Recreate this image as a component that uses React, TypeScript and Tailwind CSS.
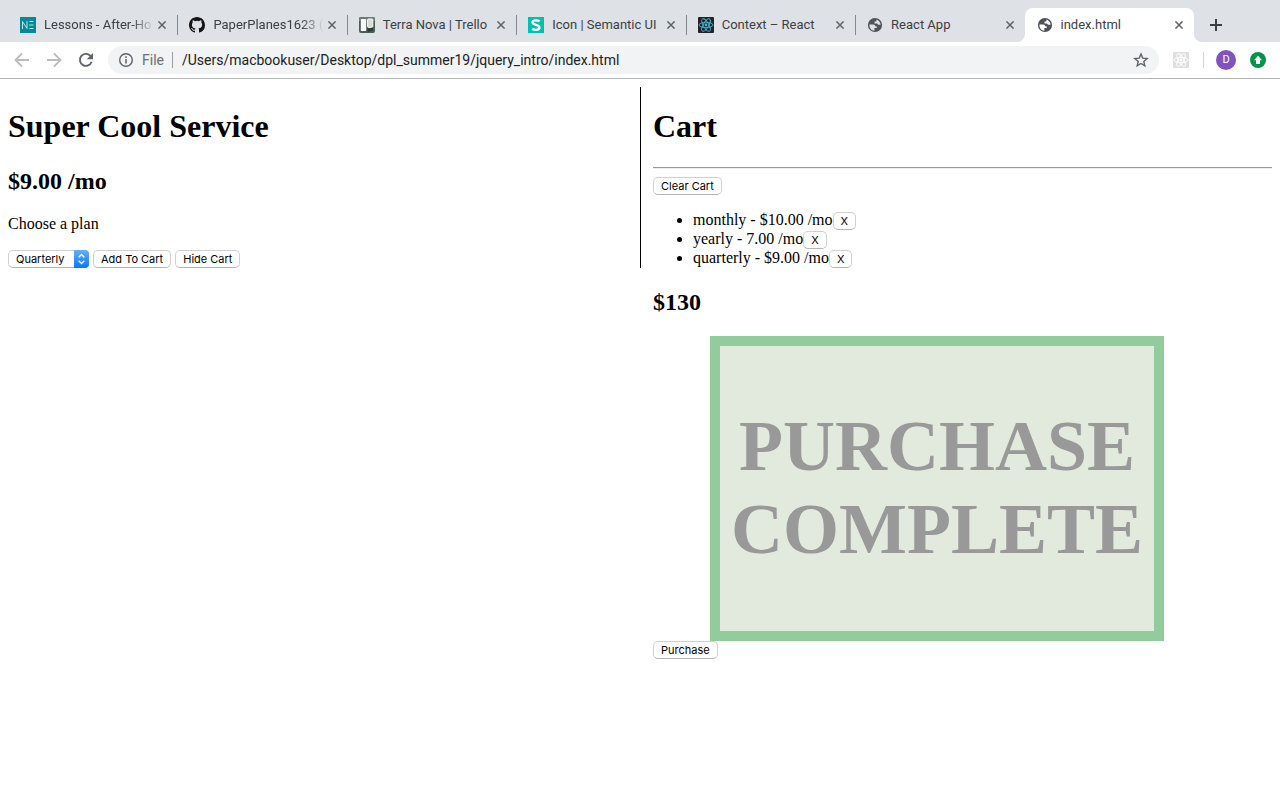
import type { ReactNode } from "react";

function NeIcon() {
  return (
    <svg viewBox="0 0 16 16" className="size-4 shrink-0" aria-hidden="true">
      <rect width="16" height="16" fill="#048999" />
      <path d="M2.5 12V4.5L7 11.5V4M9.5 4.5h4M9.2 8h4.3M9.5 11.5h4" fill="none" stroke="#d5edef" strokeWidth="0.9" />
    </svg>
  );
}

function GithubIcon() {
  return (
    <svg viewBox="0 0 16 16" className="size-4 shrink-0" aria-hidden="true">
      <path
        fill="#161514"
        d="M8 0C3.58 0 0 3.58 0 8c0 3.54 2.29 6.53 5.47 7.59.4.07.55-.17.55-.38 0-.19-.01-.82-.01-1.49-2.01.37-2.53-.49-2.69-.94-.09-.23-.48-.94-.82-1.13-.28-.15-.68-.52-.01-.53.63-.01 1.08.58 1.23.82.72 1.21 1.87.87 2.33.66.07-.52.28-.87.51-1.07-1.78-.2-3.64-.89-3.64-3.95 0-.87.31-1.59.82-2.15-.08-.2-.36-1.02.08-2.12 0 0 .67-.21 2.2.82a7.6 7.6 0 0 1 4 0c1.53-1.04 2.2-.82 2.2-.82.44 1.1.16 1.92.08 2.12.51.56.82 1.27.82 2.15 0 3.07-1.87 3.75-3.65 3.95.29.25.54.73.54 1.48 0 1.07-.01 1.93-.01 2.2 0 .21.15.46.55.38A8.01 8.01 0 0 0 16 8c0-4.42-3.58-8-8-8Z"
      />
    </svg>
  );
}

function TrelloIcon() {
  return (
    <svg viewBox="0 0 16 16" className="size-4 shrink-0" aria-hidden="true">
      <rect width="16" height="16" rx="2" fill="#4b5c55" />
      <path d="M0 2a2 2 0 0 1 2-2h12a2 2 0 0 1 2 2v2H0Z" fill="#6d7d76" />
      <rect x="1.8" y="2" width="5.4" height="12" rx="0.8" fill="#fff" />
      <rect x="8.6" y="2" width="5.2" height="8.4" rx="0.8" fill="#d5dbd8" stroke="#fff" strokeWidth="1" />
      <path d="M8 11.5l6-1v3l-5 1.5Z" fill="#2e3b37" />
    </svg>
  );
}

function SemanticIcon() {
  return (
    <svg viewBox="0 0 16 16" className="size-4 shrink-0" aria-hidden="true">
      <rect width="16" height="16" fill="#00bfb3" />
      <path d="M11.6 4.4C10.4 3.4 4.6 2.4 4.6 5.5c0 2.9 6.8 1.9 6.8 5 0 3.3-5.6 2.6-7.2 1.3" fill="none" stroke="#fff" strokeWidth="2.4" />
    </svg>
  );
}

function Atom({ back, line }: { back: string; line: string }) {
  return (
    <svg viewBox="0 0 16 16" className="size-4 shrink-0" aria-hidden="true">
      <rect width="16" height="16" rx="1" fill={back} />
      <g fill="none" stroke={line} strokeWidth="0.9">
        <ellipse cx="8" cy="8" rx="7" ry="2.7" />
        <ellipse cx="8" cy="8" rx="7" ry="2.7" transform="rotate(60 8 8)" />
        <ellipse cx="8" cy="8" rx="7" ry="2.7" transform="rotate(120 8 8)" />
      </g>
      <circle cx="8" cy="8" r="1.4" fill={line} />
    </svg>
  );
}

function GlobeIcon({ land }: { land: string }) {
  return (
    <svg viewBox="0 0 16 16" className="size-4 shrink-0" aria-hidden="true">
      <circle cx="8" cy="8" r="7.1" fill="#505357" />
      <path
        fill={land}
        d="M2.4 7.4h3.8c1.3 0 1.9.7 1.9 1.8h1.6v1.9H7.4v2.6c-3-.2-5.2-2.8-5-6.3ZM9.4 2.4c2.3.7 4 2.8 4.2 5.3h-2c-.9 0-1.3-.5-1.3-1.2H7.5V4.6h1.1c.8 0 1-.5.8-2.2Z"
      />
    </svg>
  );
}

function CloseIcon() {
  return (
    <svg viewBox="0 0 8 8" className="size-2" aria-hidden="true">
      <path d="M0.4 0.4l7.2 7.2M7.6 0.4L0.4 7.6" stroke="#5f6368" strokeWidth="1.5" />
    </svg>
  );
}

type TabInfo = { title: string; icon: ReactNode; fade?: boolean; active?: boolean; divider?: boolean };

const tabs: TabInfo[] = [
  { title: "Lessons - After-Ho", icon: <NeIcon />, fade: true, divider: true },
  { title: "PaperPlanes1623 (", icon: <GithubIcon />, fade: true, divider: true },
  { title: "Terra Nova | Trello", icon: <TrelloIcon />, divider: true },
  { title: "Icon | Semantic UI", icon: <SemanticIcon />, divider: true },
  { title: "Context – React", icon: <Atom back="#20232a" line="#43b9d0" />, divider: true },
  { title: "React App", icon: <GlobeIcon land="#dee1e6" /> },
  { title: "index.html", icon: <GlobeIcon land="#ffffff" />, active: true },
];

function Tab({ title, icon, fade, active, divider }: TabInfo) {
  return (
    <div
      className={
        active
          ? "relative flex h-[34px] min-w-0 flex-1 items-center rounded-t-lg bg-white pr-[11px] pl-3"
          : "relative flex h-[34px] min-w-0 flex-1 items-center pr-[11px] pl-3"
      }
    >
      {icon}
      <a
        href="#"
        className={
          fade
            ? "-mr-1 ml-2 min-w-0 flex-1 whitespace-nowrap mask-r-from-80%"
            : "-mr-1 ml-2 min-w-0 flex-1 whitespace-nowrap"
        }
      >
        {title}
      </a>
      <button type="button" aria-label={`Close ${title}`} className="ml-2 flex">
        <CloseIcon />
      </button>
      {divider && <span className="absolute top-[7px] -right-px h-5 w-px bg-[#85888c]" />}
      {active && (
        <>
          <svg viewBox="0 0 8 8" className="absolute bottom-0 -left-2 size-2" aria-hidden="true">
            <path d="M8 0v8H0a8 8 0 0 0 8-8Z" fill="#fff" />
          </svg>
          <svg viewBox="0 0 8 8" className="absolute -right-2 bottom-0 size-2" aria-hidden="true">
            <path d="M0 0v8h8a8 8 0 0 1-8-8Z" fill="#fff" />
          </svg>
        </>
      )}
    </div>
  );
}

function Browser() {
  return (
    <header className="border-b border-[#b4b5b7] font-[Roboto,sans-serif]">
      <div className="flex h-[42px] items-end bg-[#dee1e6] pr-[58px] pl-2 text-[13px] text-[#3c4043]">
        <nav aria-label="Tabs" className="flex min-w-0 flex-1">
          {tabs.map((t) => (
            <Tab key={t.title} {...t} />
          ))}
        </nav>
        <button type="button" aria-label="New tab" className="ml-4 mb-[11px] flex">
          <svg viewBox="0 0 12 12" className="size-3" aria-hidden="true">
            <path d="M6 0v12M0 6h12" stroke="#3c4043" strokeWidth="2" />
          </svg>
        </button>
      </div>
      <div className="flex h-9 items-center px-3.5">
        <button type="button" aria-label="Back" className="flex">
          <svg viewBox="0 0 16 16" className="size-4" aria-hidden="true">
            <path d="M15 8H2M8 1.5L1.5 8 8 14.5" fill="none" stroke="#babcbe" strokeWidth="1.8" />
          </svg>
        </button>
        <button type="button" aria-label="Forward" className="ml-4 flex">
          <svg viewBox="0 0 16 16" className="size-4" aria-hidden="true">
            <path d="M1 8h13M8 1.5L14.5 8 8 14.5" fill="none" stroke="#babcbe" strokeWidth="1.8" />
          </svg>
        </button>
        <button type="button" aria-label="Reload" className="ml-4 flex">
          <svg viewBox="0 0 16 16" className="size-4" aria-hidden="true">
            <path d="M13.6 9.8A6 6 0 1 1 12.4 3.9L14 5.5" fill="none" stroke="#5f6368" strokeWidth="1.9" />
            <path d="M15 1v6.2H8.8Z" fill="#5f6368" />
          </svg>
        </button>
        <div className="ml-3.5 flex h-7 min-w-0 flex-1 items-center rounded-full bg-[#f1f3f4] px-2.5 text-sm">
          <svg viewBox="0 0 16 16" className="size-4 shrink-0" aria-hidden="true">
            <circle cx="8" cy="8" r="6.3" fill="none" stroke="#5f6368" strokeWidth="1.4" />
            <path d="M8 7v4.5M8 4.3v1.6" stroke="#5f6368" strokeWidth="1.5" />
          </svg>
          <span className="ml-2 text-[#6a7076]">File</span>
          <span className="ml-2 h-4 w-px bg-[#9a9da1]" />
          <input
            aria-label="Address"
            defaultValue="/Users/macbookuser/Desktop/dpl_summer19/jquery_intro/index.html"
            className="ml-[9px] min-w-0 flex-1 bg-transparent text-[#202124] outline-none"
          />
          <button type="button" aria-label="Bookmark" className="flex">
            <svg viewBox="0 0 16 16" className="size-4" aria-hidden="true">
              <path d="M8 2l1.7 4.1 4.5.4-3.4 2.9 1 4.4L8 11.5l-3.8 2.3 1-4.4-3.4-2.9 4.5-.4Z" fill="none" stroke="#5f6368" strokeWidth="1.4" />
            </svg>
          </button>
        </div>
        <button type="button" aria-label="React extension" className="ml-3.5 flex">
          <Atom back="#dfdfdf" line="#ffffff" />
        </button>
        <span className="ml-3.5 h-4 w-px bg-[#d0d2d5]" />
        <button type="button" className="ml-3 flex size-5 items-center justify-center rounded-full bg-[#8153be] text-[11px] text-white">
          D
        </button>
        <button type="button" aria-label="Update" className="ml-3.5 flex">
          <svg viewBox="0 0 16 16" className="size-4" aria-hidden="true">
            <circle cx="8" cy="8" r="8" fill="#04934a" />
            <path d="M8 3.8l4 4.4h-2V12H6V8.2H4Z" fill="#fff" />
          </svg>
        </button>
      </div>
    </header>
  );
}

function PushButton({ children, label }: { children: ReactNode; label?: string }) {
  return (
    <button
      type="button"
      aria-label={label}
      className="h-[18px] rounded-[5px] border border-[#d0d0d0] border-b-[#b4b4b4] bg-white px-[7px] font-[Inter,sans-serif] text-[11px] leading-4 text-black"
    >
      {children}
    </button>
  );
}

const items = ["monthly - $10.00 /mo", "yearly - 7.00 /mo", "quarterly - $9.00 /mo"];

export default function App() {
  return (
    <div className="min-h-screen bg-white text-black">
      <Browser />
      <main className="grid grid-cols-2 items-start p-2 font-['Liberation_Serif',serif] text-base leading-[18px]">
        <section className="-mr-px border-r border-black">
          <h1 className="mt-[21px] text-[32px] leading-9 font-bold">Super Cool Service</h1>
          <h2 className="mt-[23px] text-2xl leading-7 font-bold">$9.00 /mo</h2>
          <p className="mt-5">
            <label htmlFor="plan">Choose a plan</label>
          </p>
          <div className="mt-[17px] flex gap-1">
            <div className="relative flex h-[18px]">
              <select
                id="plan"
                defaultValue="quarterly"
                className="w-[81px] appearance-none rounded-[5px] border border-[#d0d0d0] border-b-[#b4b4b4] bg-white pl-[7px] font-[Inter,sans-serif] text-[11px] leading-4"
              >
                <option value="monthly">Monthly</option>
                <option value="quarterly">Quarterly</option>
                <option value="yearly">Yearly</option>
              </select>
              <svg viewBox="0 0 15 18" className="pointer-events-none absolute top-0 right-0 h-[18px] w-[15px]" aria-hidden="true">
                <defs>
                  <linearGradient id="blue" x1="0" y1="0" x2="0" y2="1">
                    <stop offset="0" stopColor="#62b0fb" />
                    <stop offset="1" stopColor="#0a78fb" />
                  </linearGradient>
                </defs>
                <path d="M0 0h11a4 4 0 0 1 4 4v10a4 4 0 0 1-4 4H0Z" fill="url(#blue)" />
                <path d="M4.7 7.3l2.8-2.8 2.8 2.8M4.7 10.7l2.8 2.8 2.8-2.8" fill="none" stroke="#fff" strokeWidth="1.4" />
              </svg>
            </div>
            <PushButton>Add To Cart</PushButton>
            <PushButton>Hide Cart</PushButton>
          </div>
        </section>
        <section className="pl-[13px]">
          <h1 className="mt-[21px] text-[32px] leading-9 font-bold">Cart</h1>
          <hr className="mt-[23px] mb-2 border-t border-b border-t-[#9a9a9a] border-b-[#eeeeee]" />
          <div className="flex">
            <PushButton>Clear Cart</PushButton>
          </div>
          <ul className="mt-4 list-disc pl-10">
            {items.map((item) => (
              <li key={item}>
                <div className="flex h-[19px] items-end">
                  <span className="self-start">{item}</span>
                  <PushButton label={`Remove ${item}`}>X</PushButton>
                </div>
              </li>
            ))}
          </ul>
          <h2 className="mt-5 text-2xl leading-7 font-bold">$130</h2>
          <div className="mt-5 ml-[57px] flex h-[305px] w-[454px] items-center justify-center border-[10px] border-[#92cb9c] bg-[#e1eadd] pb-0.5 text-center text-[72px] leading-[83px] font-bold text-[#999999]">
            PURCHASE
            <br />
            COMPLETE
          </div>
          <div className="flex">
            <PushButton>Purchase</PushButton>
          </div>
        </section>
      </main>
    </div>
  );
}
